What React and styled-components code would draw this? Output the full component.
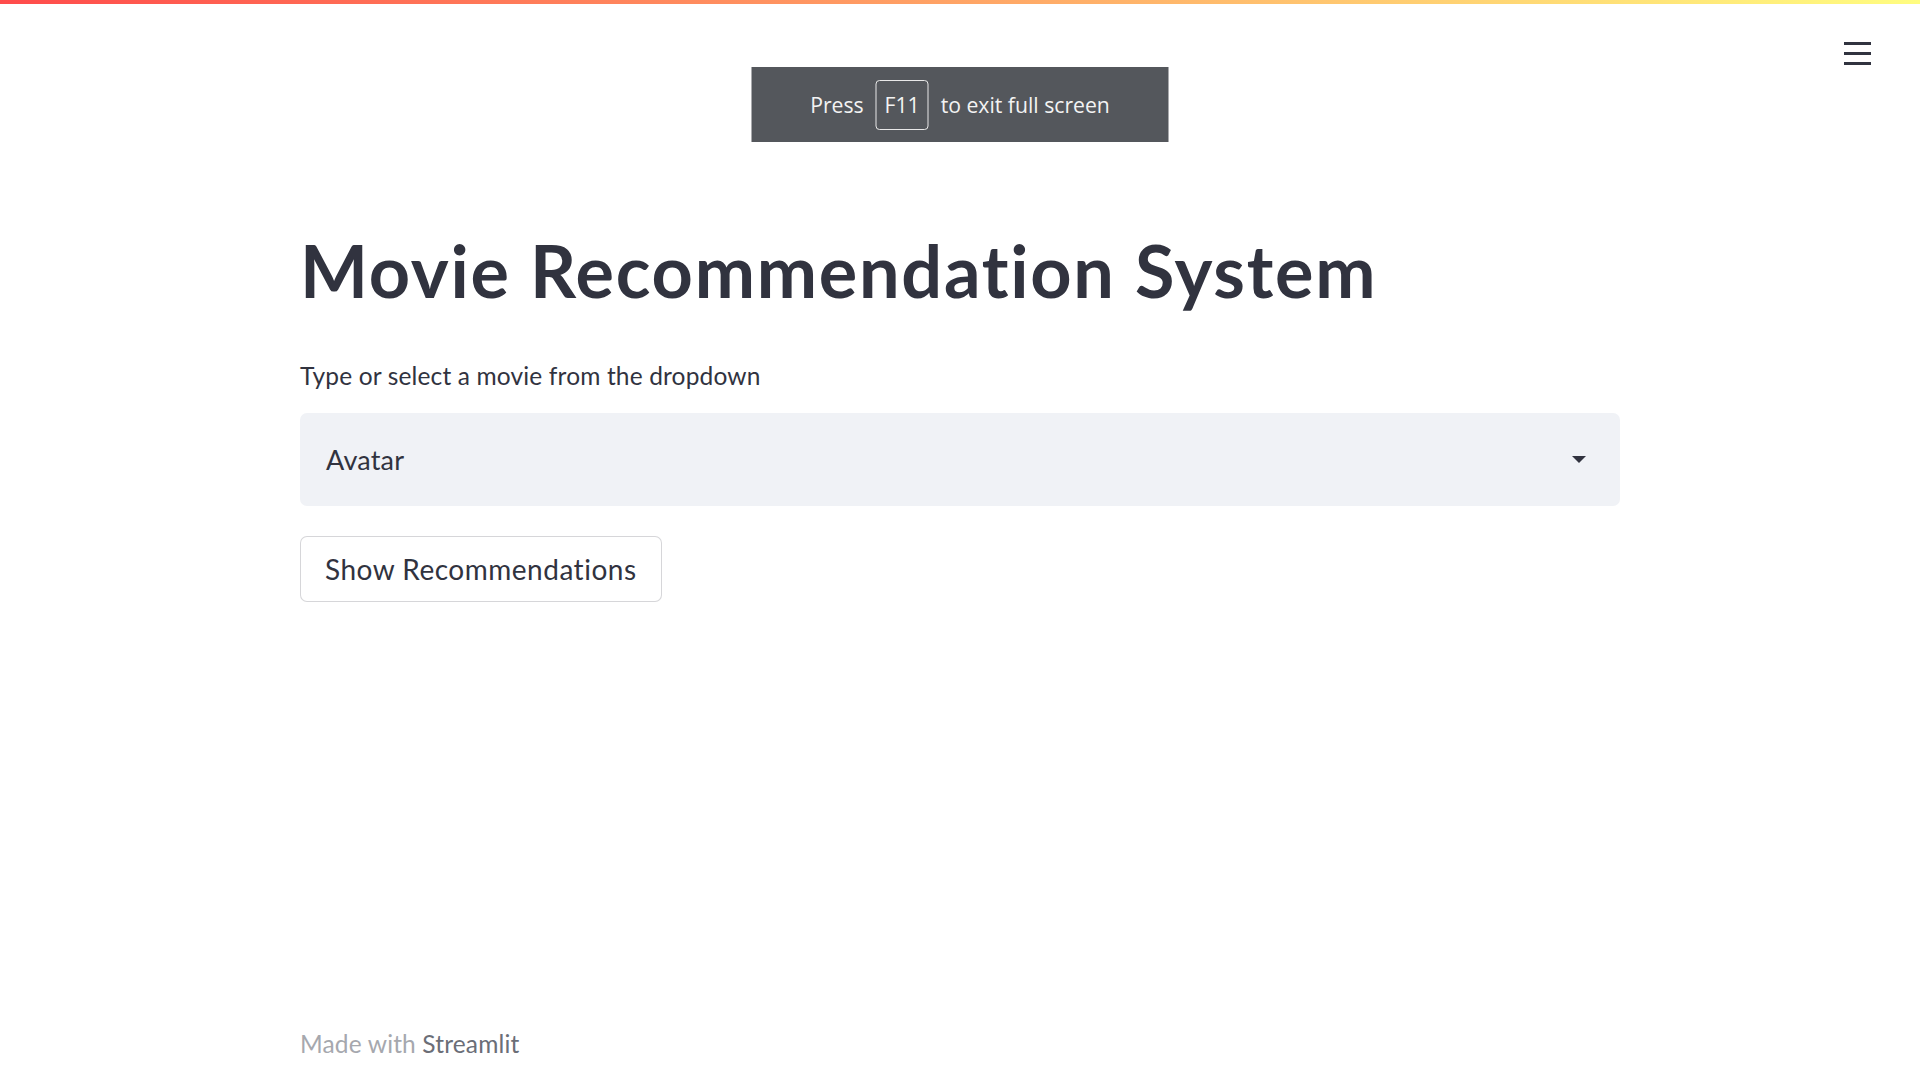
import React, { useState } from "react";
import styled, { createGlobalStyle } from "styled-components";

const GlobalStyle = createGlobalStyle`
  html, body {
    margin: 0;
    padding: 0;
    background: #ffffff;
  }
  body {
    font-family: Lato, "Noto Sans", sans-serif;
    color: #31333f;
    font-variant-ligatures: none;
  }
`;

function App() {
  const [movie] = useState("Avatar");
  return (
    <Page>
      <GlobalStyle />
      <Decoration />
      <MenuButton aria-label="menu">
        <MenuBar />
        <MenuBar />
        <MenuBar />
      </MenuButton>
      <FullscreenToast>
        <span>Press</span>
        <KeyCap>F11</KeyCap>
        <span>to exit full screen</span>
      </FullscreenToast>
      <Main>
        <Title>Movie Recommendation System</Title>
        <Label>Type or select a movie from the dropdown</Label>
        <Select>
          <SelectValue>{movie}</SelectValue>
          <svg width="14" height="7" viewBox="0 0 14 7">
            <path d="M0 0 L14 0 L7 7 Z" fill="#31333f" />
          </svg>
        </Select>
        <Button>Show Recommendations</Button>
      </Main>
      <Footer>
        Made with <FooterLink>Streamlit</FooterLink>
      </Footer>
    </Page>
  );
}
export default App;

const Page = styled.div`
  position: relative;
  min-height: 100vh;
  display: flex;
  flex-direction: column;
`;

const Decoration = styled.div`
  height: 4px;
  width: 100%;
  background-image: linear-gradient(90deg, rgb(255, 75, 75), rgb(255, 253, 128));
`;

const MenuButton = styled.div`
  position: absolute;
  top: 42px;
  right: 49px;
  width: 27px;
  display: flex;
  flex-direction: column;
  gap: 7px;
  cursor: pointer;
`;

const MenuBar = styled.div`
  height: 3px;
  background: #31333f;
`;

const FullscreenToast = styled.div`
  position: absolute;
  top: 67px;
  left: 50%;
  transform: translateX(-50%);
  width: 417px;
  height: 75px;
  background: #54575c;
  color: #f3f3f3;
  font-family: "Open Sans", "Noto Sans", sans-serif;
  font-size: 21.2px;
  display: flex;
  align-items: center;
  justify-content: center;
  gap: 12px;
`;

const KeyCap = styled.span`
  border: 1.5px solid #e8e8e8;
  border-radius: 4px;
  width: 53px;
  height: 50px;
  box-sizing: border-box;
  display: flex;
  align-items: center;
  justify-content: center;
`;

const Main = styled.div`
  width: 1320px;
  margin: 0 auto;
  flex: 1;
  padding-top: 223px;
  display: flex;
  flex-direction: column;
  align-items: flex-start;
`;

const Title = styled.h1`
  margin: 0;
  font-size: 72px;
  line-height: 1.2;
  font-weight: 700;
  color: #31333f;
  letter-spacing: 1.75px;
`;

const Label = styled.div`
  margin-top: 48px;
  font-size: 24.5px;
  line-height: 1.2;
  letter-spacing: 0.15px;
  color: #31333f;
`;

const Select = styled.div`
  margin-top: 22px;
  width: 100%;
  box-sizing: border-box;
  height: 93px;
  background: #f0f2f6;
  border-radius: 7px;
  padding: 0 34px 0 26px;
  display: flex;
  align-items: center;
  justify-content: space-between;
`;

const SelectValue = styled.span`
  font-size: 27px;
  letter-spacing: 0.2px;
  color: #31333f;
`;

const Button = styled.button`
  margin-top: 30px;
  height: 66px;
  box-sizing: border-box;
  padding: 0 24px;
  background: #ffffff;
  border: 1px solid rgba(49, 51, 63, 0.2);
  border-radius: 7px;
  font-family: Lato, "Noto Sans", sans-serif;
  font-variant-ligatures: none;
  font-size: 28px;
  letter-spacing: 0.5px;
  color: #31333f;
  cursor: pointer;
`;

const Footer = styled.div`
  width: 1320px;
  margin: 0 auto;
  padding-bottom: 22px;
  font-size: 24.5px;
  line-height: 1.2;
  letter-spacing: 0.15px;
  color: #a6a8ae;
`;

const FooterLink = styled.span`
  color: #6b6e77;
`;
